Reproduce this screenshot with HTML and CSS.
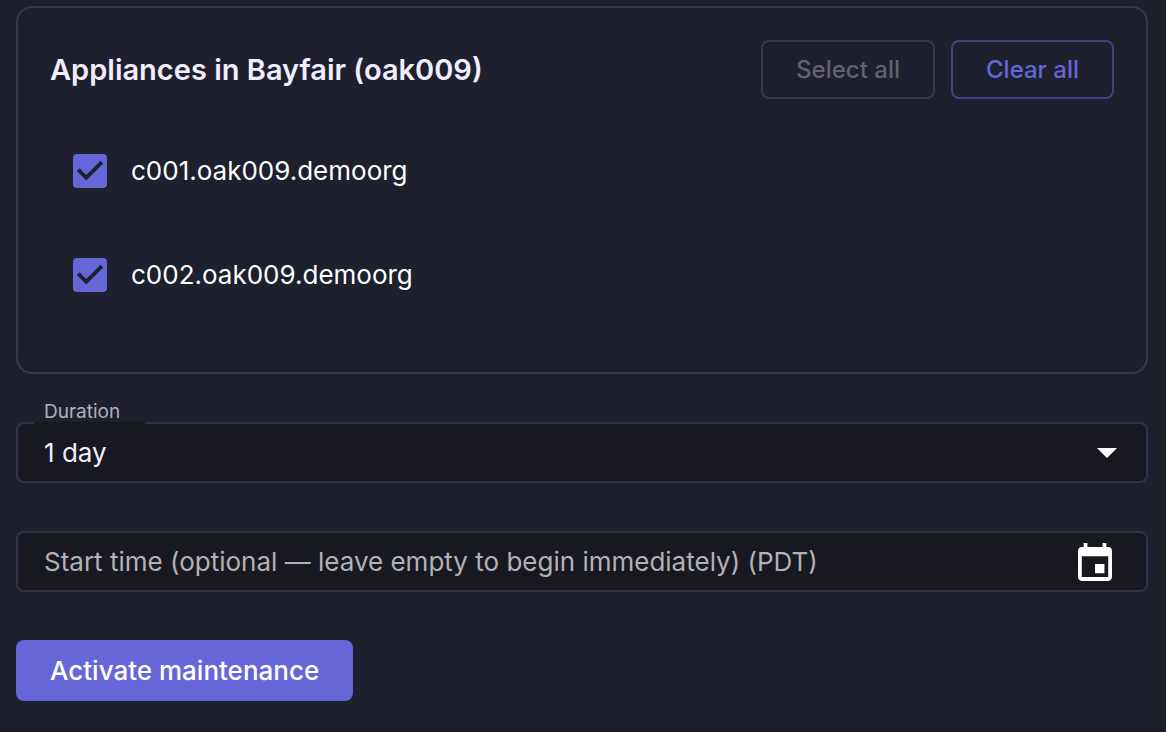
FILE: index.html
```html
<!DOCTYPE html>
<html lang="en">
<head>
<meta charset="utf-8">
<title>Maintenance</title>
<link rel="stylesheet" href="styles.css">
</head>

<body>
<form class="maintenance">
  <section class="card">
    <div class="card-header">
      <h2 class="card-title">Appliances in Bayfair (oak009)</h2>
      <div class="card-actions">
        <button type="button" class="btn btn-outline" disabled>Select all</button>
        <button type="button" class="btn btn-outline">Clear all</button>
      </div>
    </div>
    <div class="appliances">
      <label class="appliance">
        <span class="check">
          <input type="checkbox" class="check-input" checked>
          <svg class="check-mark" viewBox="3 3 18 18"><path d="M10 17l-5-5 1.41-1.41L10 14.17l7.59-7.59L19 8z"/></svg>
        </span>
        <span>c001.oak009.demoorg</span>
      </label>
      <label class="appliance">
        <span class="check">
          <input type="checkbox" class="check-input" checked>
          <svg class="check-mark" viewBox="3 3 18 18"><path d="M10 17l-5-5 1.41-1.41L10 14.17l7.59-7.59L19 8z"/></svg>
        </span>
        <span>c002.oak009.demoorg</span>
      </label>
    </div>
  </section>

  <div class="field">
    <label class="field-label" for="duration">Duration</label>
    <div class="field-box field-notched">
      <select class="field-control" id="duration">
        <option>1 day</option>
      </select>
      <svg class="field-arrow" viewBox="0 0 20 10"><path d="M0 0h20L10 10z"/></svg>
    </div>
  </div>

  <div class="field-box">
    <input type="text" class="field-control" id="start" aria-label="Start time" placeholder="Start time (optional — leave empty to begin immediately) (PDT)">
    <button type="button" class="calendar-btn" aria-label="Choose date">
      <svg class="calendar-icon" viewBox="3 1 18 20"><path d="M17 12h-5v5h5v-5zM16 1v2H8V1H6v2H5c-1.11 0-1.99.9-1.99 2L3 19c0 1.1.89 2 2 2h14c1.1 0 2-.9 2-2V5c0-1.1-.9-2-2-2h-1V1h-2zm3 18H5V8h14v11z"/></svg>
    </button>
  </div>

  <button type="submit" class="btn btn-primary">Activate maintenance</button>
</form>
</body>
</html>
```

FILE: styles.css
```css
* {
  box-sizing: border-box;
}

body {
  margin: 0;
  min-height: 100vh;
  background: #1f202d;
  border-bottom: 4px solid #1e1828;
  color: #fff;
  font-family: Inter, "Liberation Sans", sans-serif;
  font-size: 26px;
  line-height: 32px;
}

button,
input,
select {
  font: inherit;
}

.maintenance {
  display: flex;
  flex-direction: column;
  padding: 6px 18px 24px 16px;
}

.card {
  padding: 32px 32px 45px;
  border: 2px solid #393a47;
  border-radius: 16px;
}

.card-header {
  display: flex;
  align-items: center;
  justify-content: space-between;
}

.card-title {
  margin: 0;
  color: #f0eeff;
  font-size: 29px;
  font-weight: 600;
}

.card-actions {
  display: flex;
  gap: 16px;
}

.btn {
  border-radius: 8px;
  font-weight: 500;
  cursor: pointer;
}

.btn-outline {
  height: 59px;
  padding: 0 33px;
  border: 2px solid #424282;
  background: none;
  color: #6567d8;
  font-size: 24px;
}

.btn-outline:disabled {
  border-color: #393a47;
  color: #62636c;
  cursor: default;
}

.appliances {
  padding: 20px 23px 0;
}

.appliance {
  display: flex;
  align-items: center;
  gap: 24px;
  height: 104px;
}

.check {
  position: relative;
  width: 34px;
  height: 34px;
}

.check-input {
  appearance: none;
  display: block;
  width: 34px;
  height: 34px;
  margin: 0;
  border-radius: 4px;
  background: #6567d8;
}

.check-mark {
  position: absolute;
  inset: 0;
  fill: #1f202d;
  pointer-events: none;
}

.field {
  margin: 28px 0 48px;
}

.field-label {
  display: block;
  width: max-content;
  padding-left: 28px;
  color: #b0b0b6;
  font-size: 19px;
  line-height: 20px;
}

.field-box {
  position: relative;
  display: flex;
  align-items: center;
  border: 2px solid #323147;
  border-radius: 8px;
  background: #181820;
}

/* gap in the top border under the label */
.field-notched::before {
  content: "";
  position: absolute;
  top: -2px;
  left: 16px;
  width: 111px;
  height: 2px;
  background: #181820;
}

.field-control {
  appearance: none;
  flex: 1;
  min-width: 0;
  height: 57px;
  padding: 0 26px;
  border: 0;
  outline: 0;
  background: none;
  color: #f0eeff;
}

.field-control::placeholder {
  color: #b2b2b5;
  opacity: 1;
}

.field-arrow {
  position: absolute;
  right: 29px;
  width: 20px;
  height: 10px;
  fill: #fff;
  pointer-events: none;
}

.calendar-btn {
  display: flex;
  margin-right: 34px;
  padding: 0;
  border: 0;
  background: none;
  cursor: pointer;
}

.calendar-icon {
  width: 34px;
  height: 38px;
  fill: #fff;
}

.btn-primary {
  align-self: flex-start;
  height: 61px;
  margin-top: 48px;
  padding: 0 34px;
  border: 0;
  background: #6567d8;
  color: #fff;
}
```
